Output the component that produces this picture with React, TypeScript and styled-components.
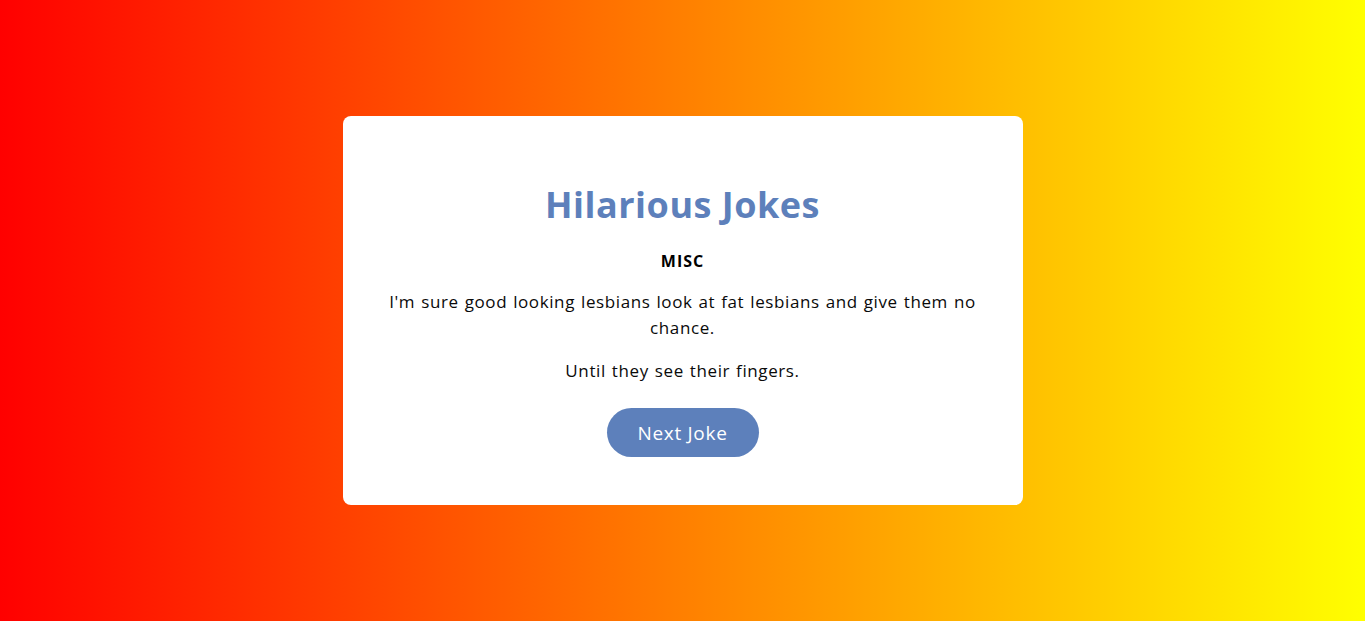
import React from "react";
import styled, { createGlobalStyle } from "styled-components";

const GlobalStyle = createGlobalStyle`
  * { box-sizing: border-box; }
  html, body { margin: 0; padding: 0; }
  body {
    font-family: "Open Sans", "Noto Sans", sans-serif;
    background: linear-gradient(to right, #ff0000, #ffff00);
    min-height: 100vh;
  }
`;

const Page = styled.main`
  min-height: 100vh;
  display: flex;
  align-items: center;
  justify-content: center;
`;

const Card = styled.section`
  width: 680px;
  background: #ffffff;
  border-radius: 8px;
  padding: 40px 40px 48px;
  display: flex;
  flex-direction: column;
  align-items: center;
  text-align: center;
`;

const Title = styled.h1`
  margin: 27px 0 0;
  font-size: 36px;
  line-height: 44px;
  font-weight: 700;
  color: #5d80bb;
  letter-spacing: 0.5px;
`;

const Category = styled.h3`
  margin: 22px 0 0;
  font-size: 16px;
  line-height: 24px;
  font-weight: 700;
  color: #000;
  letter-spacing: 1px;
`;

const Line = styled.p<{ $gap: number }>`
  margin: ${(p) => p.$gap}px 0 0;
  font-size: 17px;
  line-height: 26px;
  color: #0a0a0a;
  letter-spacing: 0.6px;
  word-spacing: 1px;
`;

const Button = styled.button`
  margin-top: 24px;
  width: 152px;
  height: 49px;
  border: none;
  border-radius: 25px;
  background: #5d80bb;
  color: #fff;
  font-family: inherit;
  font-size: 19px;
  letter-spacing: 0.7px;
  cursor: pointer;
`;

export default function App() {
  return (
    <>
      <GlobalStyle />
      <Page>
        <Card>
          <Title>Hilarious Jokes</Title>
          <Category>MISC</Category>
          <Line $gap={16}>
            I'm sure good looking lesbians look at fat lesbians and give them no chance.
          </Line>
          <Line $gap={17}>Until they see their fingers.</Line>
          <Button>Next Joke</Button>
        </Card>
      </Page>
    </>
  );
}
